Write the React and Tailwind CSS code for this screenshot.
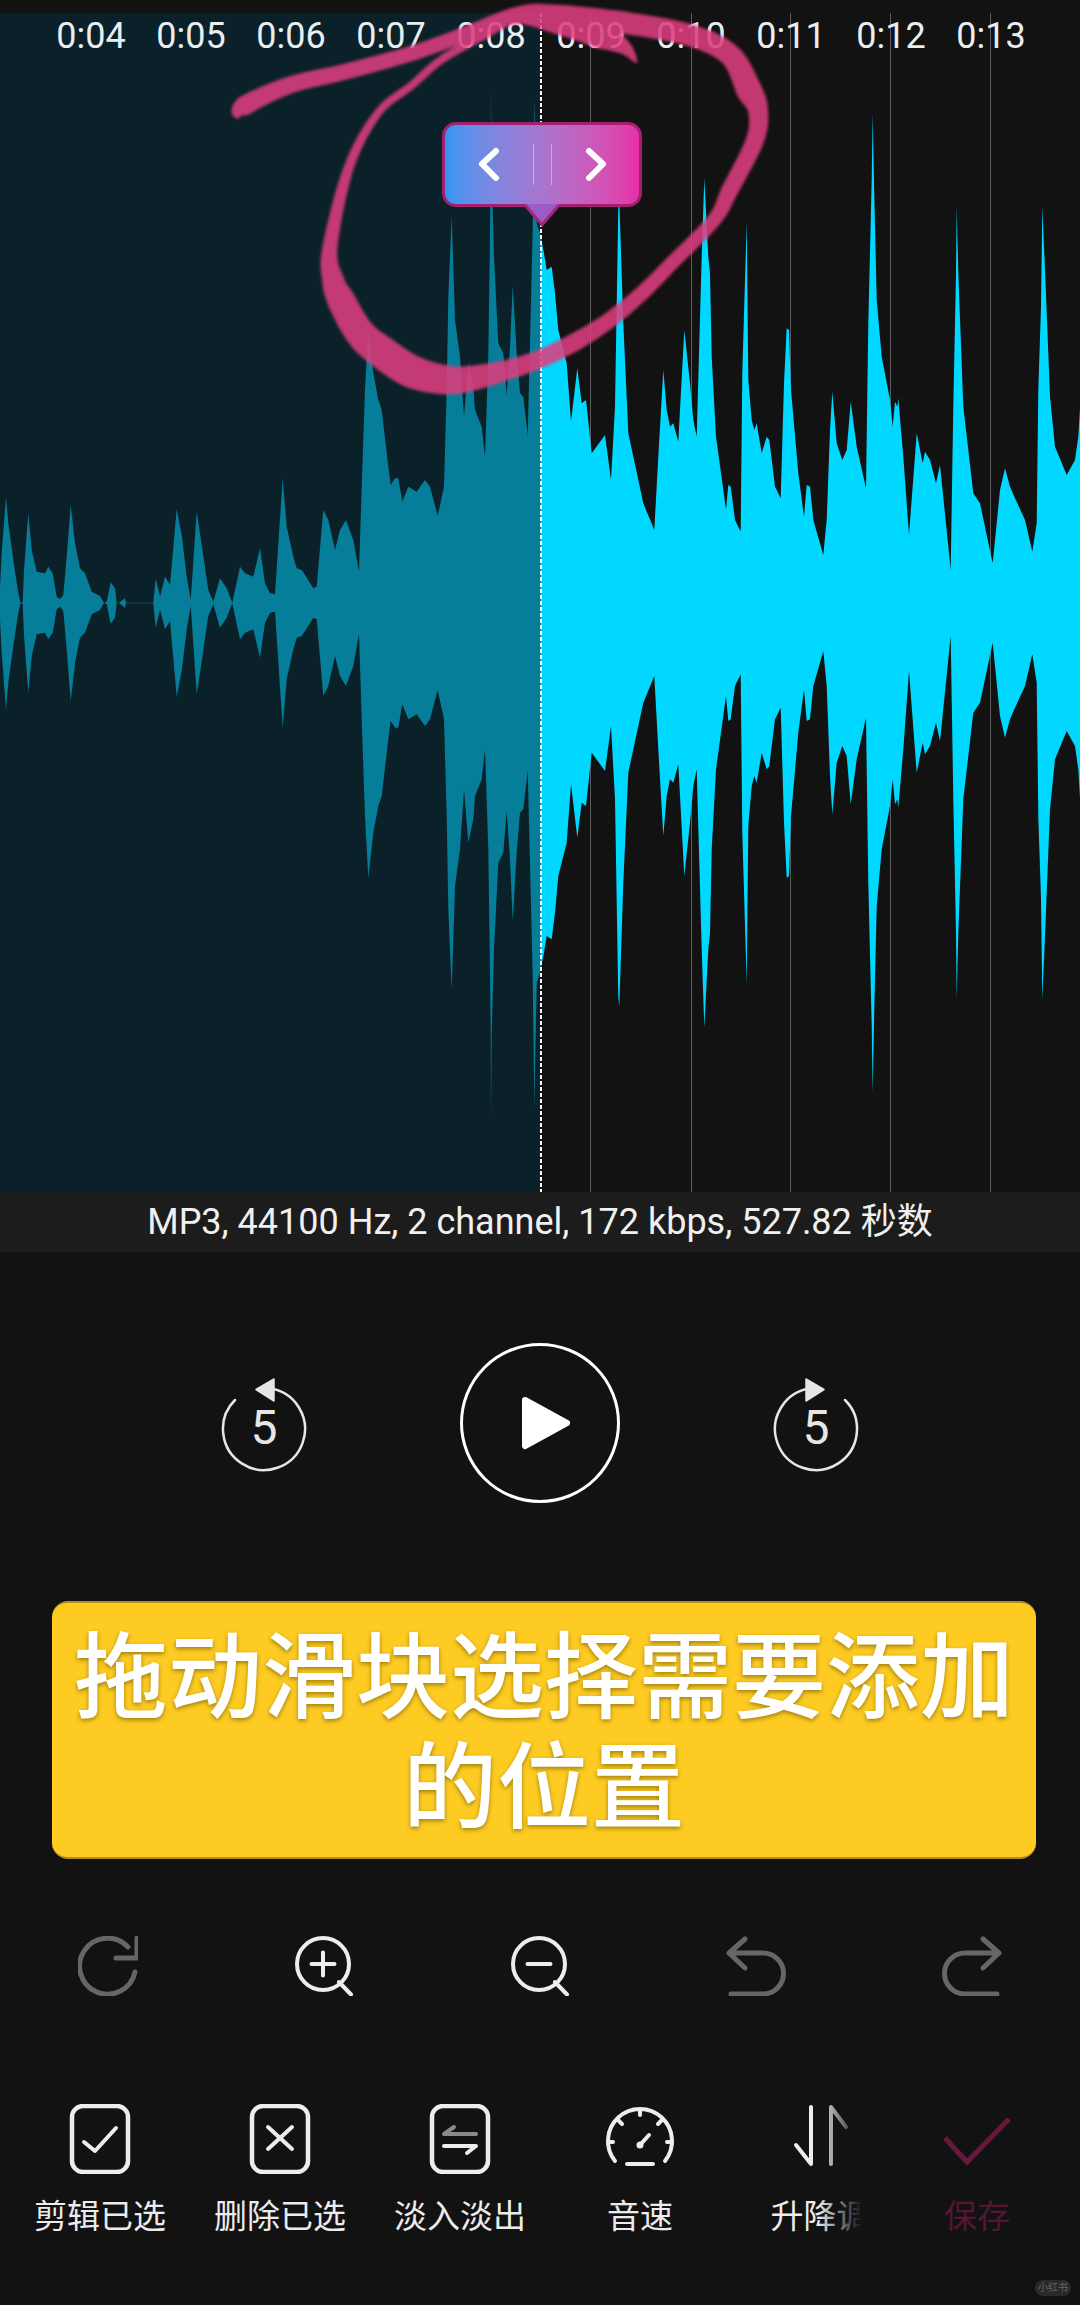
import React from "react";

const z11 = [[0,350],[5,250],[18,80],[25,160],[40,270],[55,370],[62,400],[68,395],[72,300],[85,130],[95,240],[110,305],[135,310],[145,290],[158,310],[170,380],[180,388],[190,375],[200,260],[212,105],[225,220],[240,295],[255,310],[275,365],[300,378],[312,399],[320,395],[332,337],[345,355],[350,399],[358,398],[375,385],[378,398],[460,398],[467,325],[480,380],[495,320],[510,345],[530,118],[545,195],[560,320],[572,390],[590,125],[605,225],[625,360],[640,395],[660,325],[680,355],[697,398],[720,290],[735,310],[760,320],[780,235],[795,340],[810,370],[825,373],[848,25],[860,170],[880,260],[890,295],[905,300],[915,315],[940,355],[950,350],[970,120],[985,150],[1005,240]].map(([x, y]) => [x / 3, 470 + y / 3]);
const z9 = [[0,1320],[18,1290],[40,1350],[57,1445],[68,1100],[75,900],[85,715],[100,850],[115,930],[125,960],[145,1130],[152,1185],[165,1165],[175,1165],[187,1235],[205,1190],[230,1205],[255,1170],[270,1190],[293,1278],[312,1190],[320,900],[325,620],[335,378],[345,690],[360,800],[372,980],[385,820],[400,890],[405,960],[425,1010],[435,1100],[445,800],[449,500],[452,250],[453,-9],[455,250],[462,500],[475,760],[490,790],[500,915],[510,770],[518,585],[530,790],[540,910],[550,920],[563,1035],[570,760],[578,420],[583,25],[590,400],[600,430],[612,490],[620,540],[635,530],[645,610],[655,720],[680,820],[693,995],[712,835],[725,940],[738,930],[755,1090],[795,1035],[813,1170],[825,950],[835,355],[838,330],[850,700],[865,1030],[910,1240],[943,1320],[955,1100],[970,840],[980,960],[990,1010],[1000,1000],[1015,1055],[1033,720],[1050,880],[1060,990],[1070,1040],[1085,500],[1093,265],[1105,500]].map(([x, y]) => [340 + x / 3, 90 + y / 3]);
const z10 = [[0,550],[5,800],[18,1040],[40,1200],[48,1260],[55,1185],[62,1190],[75,1290],[92,1325],[97,850],[105,570],[110,395],[115,870],[125,990],[133,1020],[140,1000],[155,1090],[170,1040],[178,1050],[195,1190],[212,1225],[222,880],[230,715],[237,720],[243,900],[265,1150],[282,1280],[290,1185],[300,1190],[310,1290],[340,1395],[350,1290],[360,1020],[367,905],[380,1060],[397,1110],[410,1080],[422,935],[440,1070],[468,1195],[475,700],[485,270],[488,70],[492,280],[500,630],[515,800],[540,930],[548,1010],[555,935],[562,950],[565,925],[580,1100],[597,1335],[620,1030],[638,1120],[645,1085],[660,1110],[678,1180],[690,1125],[722,1440],[730,950],[738,550],[740,350],[745,550],[760,950],[790,1210],[810,1240],[848,1420],[870,1200],[885,1135],[900,1190],[915,1225],[945,1290],[967,1385],[980,1300],[985,900],[993,650],[997,350],[1005,540],[1020,920],[1035,1070],[1070,1155],[1095,1110],[1105,1040],[1110,955]].map(([x, y]) => [710 + x / 3, 90 + y / 3]);
const env = [...z11, ...z9, ...z10];
const CY = 603;
const waveD =
  "M" + env.map(([x, y]) => `${x.toFixed(1)} ${y.toFixed(1)}`).join("L") +
  "L" + [...env].reverse().map(([x, y]) => `${x.toFixed(1)} ${(2 * CY - y).toFixed(1)}`).join("L") + "Z";

function ribbon(pts) {
  const s = [];
  for (let i = 0; i < pts.length - 1; i++) {
    const p0 = pts[Math.max(i - 1, 0)], p1 = pts[i], p2 = pts[i + 1], p3 = pts[Math.min(i + 2, pts.length - 1)];
    for (let k = 0; k < 10; k++) {
      const t = k / 10, a = t * t, b = a * t;
      const f = (j) => 0.5 * (2 * p1[j] + (p2[j] - p0[j]) * t + (2 * p0[j] - 5 * p1[j] + 4 * p2[j] - p3[j]) * a + (3 * p1[j] - p0[j] - 3 * p2[j] + p3[j]) * b);
      s.push([f(0), f(1), p1[2] + (p2[2] - p1[2]) * t]);
    }
  }
  s.push(pts[pts.length - 1]);
  const L = [], R = [];
  s.forEach((p, i) => {
    const a = s[Math.max(i - 1, 0)], b = s[Math.min(i + 1, s.length - 1)];
    const dx = b[0] - a[0], dy = b[1] - a[1], n = Math.hypot(dx, dy) || 1;
    const ox = (-dy / n) * p[2] / 2, oy = (dx / n) * p[2] / 2;
    L.push(`${(p[0] + ox).toFixed(1)} ${(p[1] + oy).toFixed(1)}`);
    R.push(`${(p[0] - ox).toFixed(1)} ${(p[1] - oy).toFixed(1)}`);
  });
  return "M" + L.join("L") + "L" + R.reverse().join("L") + "Z";
}

const pinkD = ribbon([
  [236,118,4],[244,106,20],[290,85,17],[344,72,16],[413,53,15],[468,33,15],[516,14,14],[551,12,15],[620,22,22],[689,35,22],[730,55,22],[749,90,26],[758,110,20],[755,140,18],[730,190,17],[714,220,14],[673,262,14],[640,295,15],[607,322,16],[573,343,18],[540,359,18],[507,370,20],[473,378,25],[447,380,29],[413,372,33],[383,353,33],[360,333,30],[341,300,28],[333,280,22],[330,247,15],[349,167,10],[378,113,8],[412,85,8],[441,60,8],[482,36,9],[516,18,12],[560,24,22],[600,35,28],[625,48,14],[637,63,1],
]);

const times = ["0:04","0:05","0:06","0:07","0:08","0:09","0:10","0:11","0:12","0:13"];
const grid = [590, 691, 790, 890, 990];

function Skip({ flip }) {
  return (
    <svg width="100" height="111" viewBox="0 0 100 111" className="shrink-0" style={flip ? { transform: "scaleX(-1)" } : undefined}>
      <path d="M21 32A41 41 0 1 0 55 20.3" fill="none" stroke="#e6e6e6" strokeWidth="2.5" strokeLinecap="round" />
      <path d="M42 21.5L60 11V33Z" fill="#e6e6e6" stroke="#e6e6e6" strokeWidth="1.5" strokeLinejoin="round" />
    </svg>
  );
}

function SkipBtn({ flip }) {
  return (
    <div className="relative w-[100px] h-[111px] shrink-0">
      <Skip flip={flip} />
      <span className="absolute left-0 right-0 top-[33px] text-center text-[48px] leading-[54px] text-[#e6e6e6]">5</span>
    </div>
  );
}

const s = { fill: "none", stroke: "#ededed", strokeWidth: 4, strokeLinecap: "round", strokeLinejoin: "round" };
const g = { fill: "none", stroke: "#666666", strokeWidth: 5, strokeLinecap: "round", strokeLinejoin: "round" };

const topIcons = [
  <path {...g} d="M57 36A28 28 0 1 1 50 11M59 2V22H38" />,
  <path {...s} d="M45 46L57 58.5M29 16.5V39.5M17.5 28H40.5M55 28A26 26 0 1 1 3 28A26 26 0 1 1 55 28" />,
  <path {...s} d="M45 46L57 58.5M17.5 28H40.5M55 28A26 26 0 1 1 3 28A26 26 0 1 1 55 28" />,
  <path {...g} d="M19 3L3 17L19 32M3 17H37A20.5 20.5 0 0 1 37 58H5" />,
  <path {...g} d="M41 3L57 17L41 32M57 17H23A20.5 20.5 0 0 0 23 58H55" />,
];

const Box = ({ children }) => (
  <>
    <rect x="7" y="2" width="56" height="66" rx="11" fill="none" stroke="#ededed" strokeWidth="4.5" />
    {children}
  </>
);

const tools = [
  ["剪辑已选", <Box><path {...s} d="M19 38L30 47L51 24" /></Box>],
  ["删除已选", <Box><path {...s} d="M23 23L47 45M47 23L23 45" /></Box>],
  ["淡入淡出", <Box><path {...s} stroke="#8a8a8a" d="M19 30H51M19 30L29 23" /><path {...s} d="M19 42H51L42 49" /></Box>],
  ["音速", <>
    <path {...s} d="M10 57A32 32 0 1 1 60 57" />
    <path {...s} d="M35 6V11M12.5 15.5L17 20M57.5 15.5L53 20M3 38H8M67 38H62M22 60H48" />
    <path {...s} d="M35 41L44 31" />
    <circle cx="35" cy="41" r="3.5" fill="#ededed" />
  </>],
  ["升降调", <path {...s} d="M26 3V60L11 41M46 60V3L61 23" />],
];

export default function App() {
  return (
    <div className="relative w-[1080px] h-[2305px] overflow-hidden bg-[#121212] flex flex-col font-[Roboto,'Noto_Sans_CJK_SC',sans-serif]">
      {/* Waveform panel */}
      <div className="relative h-[1192px] shrink-0 flex flex-col">
        <div className="h-[13px] shrink-0" />
        <div className="flex flex-1">
          <div className="w-[540px] bg-[#0b2129]" />
          <div className="flex-1" />
        </div>

        <svg className="absolute inset-0" width="1080" height="1192" viewBox="0 0 1080 1192">
          <defs>
            <clipPath id="leftHalf"><rect x="0" y="0" width="541" height="1192" /></clipPath>
            <clipPath id="rightHalf"><rect x="541" y="0" width="539" height="1192" /></clipPath>
          </defs>
          {grid.map((x) => (
            <line key={x} x1={x + 0.5} x2={x + 0.5} y1="13" y2="1192" stroke="#5c5c5c" strokeWidth="1" />
          ))}
          <path d={waveD} fill="#067e99" clipPath="url(#leftHalf)" />
          <path d={waveD} fill="#00d8ff" clipPath="url(#rightHalf)" />
          <line x1="541" x2="541" y1="13" y2="1192" stroke="#ffffff" strokeWidth="2" strokeDasharray="4 2" />
        </svg>

        <div className="absolute left-[41px] top-[14px] flex">
          {times.map((t) => (
            <span key={t} className="w-[100px] text-center text-[36px] leading-[44px] text-[#e9eef0]">{t}</span>
          ))}
        </div>

        <svg className="absolute inset-0" width="1080" height="1192" viewBox="0 0 1080 1192">
          <path d={pinkD} fill="#dd3d7e" fillOpacity="0.88" className="blur-[1.5px]" />
        </svg>

        {/* Slider handle */}
        <div className="absolute left-[442px] top-[122px] w-[200px]">
          <div className="relative h-[85px] rounded-[14px] border-[3px] border-[#a3206f] bg-linear-to-r from-[#2f96f3] to-[#e72fa9] flex items-center justify-center gap-[32px]">
            <svg width="24" height="36" viewBox="0 0 24 36">
              <path d="M19 4L5 17L19 31" fill="none" stroke="#ffffff" strokeWidth="6" strokeLinecap="round" strokeLinejoin="round" />
            </svg>
            <div className="w-[19px] h-[41px] border-x border-white/40" />
            <svg width="24" height="36" viewBox="0 0 24 36">
              <path d="M5 4L19 17L5 31" fill="none" stroke="#ffffff" strokeWidth="6" strokeLinecap="round" strokeLinejoin="round" />
            </svg>
          </div>
          <svg className="absolute left-[80px] top-[82px]" width="40" height="24" viewBox="0 0 40 24">
            <path d="M3 0L20 21L37 0Z" fill="#9c5bc6" />
            <path d="M3 1L20 21L37 1" fill="none" stroke="#a3247a" strokeWidth="3" strokeLinejoin="round" />
          </svg>
        </div>
      </div>

      {/* Status */}
      <div className="h-[60px] shrink-0 bg-[#1c1c1c] flex items-center justify-center text-[36px] text-[#f0f0f0] whitespace-nowrap">
        MP3, 44100 Hz, 2 channel, 172 kbps, 527.82 秒数
      </div>

      {/* Transport */}
      <div className="pt-[91px] flex items-center justify-center gap-[146px]">
        <SkipBtn />
        <div className="w-[160px] h-[160px] rounded-full border-[3px] border-white flex items-center justify-center shrink-0">
          <svg width="52" height="54" viewBox="0 0 52 54" className="ml-[12px]">
            <path d="M5 4L47 27L5 50Z" fill="#ffffff" stroke="#ffffff" strokeWidth="6" strokeLinejoin="round" />
          </svg>
        </div>
        <SkipBtn flip />
      </div>

      {/* Caption */}
      <div className="mt-[98px] ml-[52px] w-[984px] h-[258px] pt-[8px] rounded-[16px] bg-[#fdcb22] border-y-2 border-[#b08d1c] flex items-center justify-center text-center text-white font-medium text-[94px] leading-[110px] [text-shadow:0_2px_4px_rgba(110,85,0,0.65)]">
        拖动滑块选择需要添加的位置
      </div>

      {/* Secondary toolbar */}
      <div className="mt-[77px] grid grid-cols-5">
        {topIcons.map((icon, i) => (
          <div key={i} className="flex justify-center">
            <svg width="60" height="60" viewBox="0 0 60 60">{icon}</svg>
          </div>
        ))}
      </div>

      {/* Tool row */}
      <div className="mt-[108px] flex">
        <div className="relative w-[862px] overflow-hidden flex pl-[10px] shrink-0">
          {tools.map(([label, icon]) => (
            <div key={label} className="w-[180px] shrink-0 flex flex-col items-center">
              <svg width="70" height="70" viewBox="0 0 70 70">{icon}</svg>
              <span className="mt-[23px] text-[33px] leading-[40px] text-[#ececec] whitespace-nowrap">{label}</span>
            </div>
          ))}
          <div className="absolute right-0 top-0 bottom-0 w-[44px] bg-linear-to-r from-transparent to-[#121212]" />
        </div>
        <div className="ml-[45px] w-[140px] flex flex-col items-center">
          <svg width="70" height="70" viewBox="0 0 70 70">
            <path d="M3 34L25 58L67 15" fill="none" stroke="#66193c" strokeWidth="5" />
          </svg>
          <span className="mt-[23px] text-[33px] leading-[40px] text-[#551534] whitespace-nowrap">保存</span>
        </div>
      </div>

      {/* Watermark */}
      <div className="absolute left-[1035px] top-[2280px] w-[36px] h-[16px] rounded-full bg-[#2a2a2a] flex items-center justify-center text-[10px] leading-none text-[#666666] whitespace-nowrap">
        小红书
      </div>
    </div>
  );
}
